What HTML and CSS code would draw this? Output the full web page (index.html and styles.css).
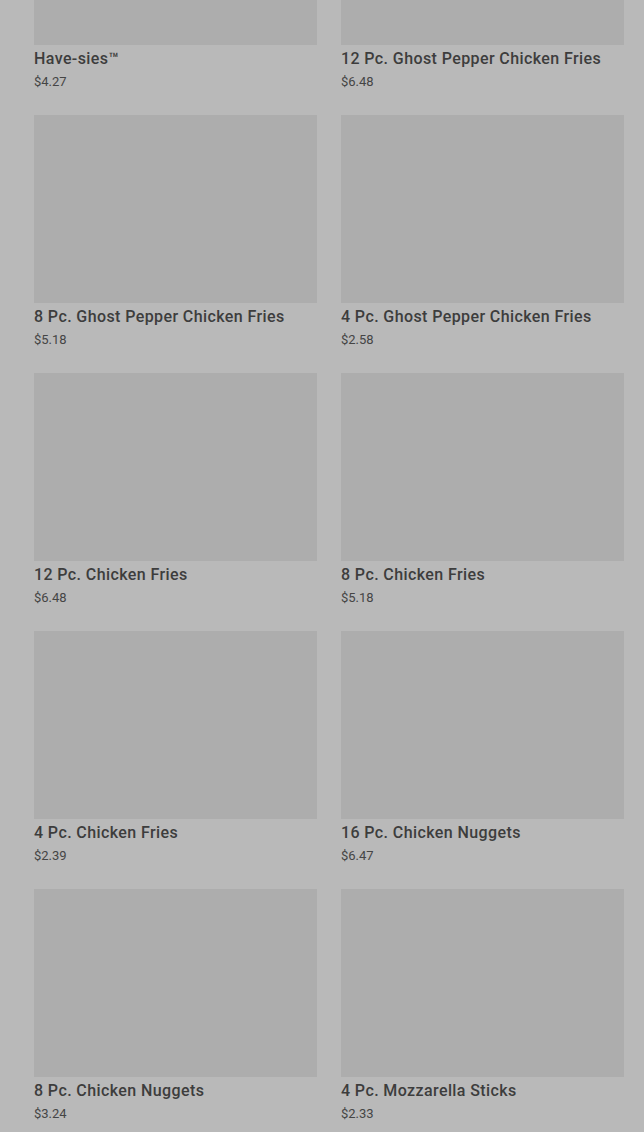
FILE: index.html
```html
<!DOCTYPE html>
<html lang="en">
<head>
    <meta charset="UTF-8">
    <meta name="viewport" content="width=device-width, initial-scale=1.0">
    <title>Menu</title>
    <link rel="stylesheet" href="styles.css">
</head>
<body>
    <div class="menu-grid">
        <div class="item"><div class="item-img"></div><h3>Have-sies™</h3><p>$4.27</p></div>
        <div class="item"><div class="item-img"></div><h3>12 Pc. Ghost Pepper Chicken Fries</h3><p>$6.48</p></div>
        <div class="item"><div class="item-img"></div><h3>8 Pc. Ghost Pepper Chicken Fries</h3><p>$5.18</p></div>
        <div class="item"><div class="item-img"></div><h3>4 Pc. Ghost Pepper Chicken Fries</h3><p>$2.58</p></div>
        <div class="item"><div class="item-img"></div><h3>12 Pc. Chicken Fries</h3><p>$6.48</p></div>
        <div class="item"><div class="item-img"></div><h3>8 Pc. Chicken Fries</h3><p>$5.18</p></div>
        <div class="item"><div class="item-img"></div><h3>4 Pc. Chicken Fries</h3><p>$2.39</p></div>
        <div class="item"><div class="item-img"></div><h3>16 Pc. Chicken Nuggets</h3><p>$6.47</p></div>
        <div class="item"><div class="item-img"></div><h3>8 Pc. Chicken Nuggets</h3><p>$3.24</p></div>
        <div class="item"><div class="item-img"></div><h3>4 Pc. Mozzarella Sticks</h3><p>$2.33</p></div>
    </div>
</body>
</html>
```
FILE: styles.css
```css
body {
    margin: 0;
    background: #b9b9b9;
    font-family: 'Roboto', 'Liberation Sans', sans-serif;
    color: #3d3d3d;
    overflow: hidden;
}
.menu-grid {
    display: grid;
    grid-template-columns: 283px 283px;
    column-gap: 24px;
    row-gap: 24px;
    padding: 0 20px 0 34px;
    margin-top: -143px;
}
.item-img {
    height: 188px;
    background: #adadad;
}
.item h3 {
    margin: 4px 0 0;
    font-size: 16px;
    line-height: 20px;
    font-weight: 500;
    letter-spacing: 0.4px;
}
.item p {
    margin: 4px 0 0;
    font-size: 13px;
    line-height: 18px;
    color: #454545;
}
```
